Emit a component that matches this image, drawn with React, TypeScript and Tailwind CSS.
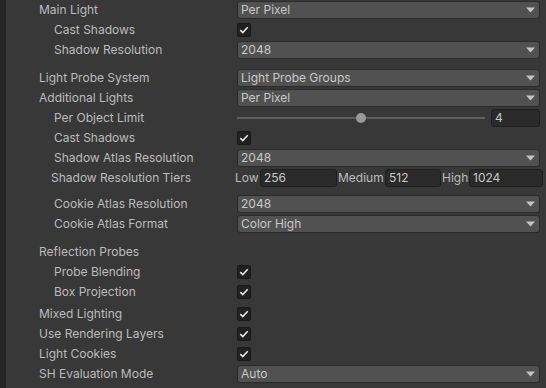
import React from "react";

const font = { fontFamily: "Inter, 'Noto Sans', sans-serif" };

function Arrow() {
  return (
    <svg width="9" height="6" viewBox="0 0 9 6" className="shrink-0">
      <path d="M0 0.5 H9 L4.5 5.5 Z" fill="#c4c4c4" />
    </svg>
  );
}

function Dropdown({ value }: { value: string }) {
  return (
    <div className="flex h-[18px] w-full items-center justify-between rounded-[3px] border border-[#2a2a2a] bg-[#515151] pl-[3px] pr-[4px] text-[#c8c8c8]">
      <span className="leading-none">{value}</span>
      <Arrow />
    </div>
  );
}

function Check() {
  return (
    <div className="flex h-[14px] w-[14px] items-center justify-center rounded-[2px] border border-[#191919] bg-[#202020]">
      <svg width="10" height="8" viewBox="0 0 10 8">
        <path d="M1.3 4.2 L3.8 6.6 L8.7 1.3" fill="none" stroke="#e6e6e6" strokeWidth="1.6" />
      </svg>
    </div>
  );
}

function Field({ value, className }: { value: string; className: string }) {
  return (
    <div className={`flex h-[18px] items-center rounded-[3px] border border-[#1f1f1f] bg-[#2a2a2a] pl-[3px] text-[#c8c8c8] ${className}`}>
      {value}
    </div>
  );
}

function Row({ label, indent, children, labelPad }: { label: string; indent?: boolean; children?: React.ReactNode; labelPad?: string }) {
  return (
    <div className="flex h-[20px] items-center">
      <div className={`w-[237px] shrink-0 ${labelPad ?? (indent ? "pl-[54px]" : "pl-[39px]")}`}>{label}</div>
      <div className="flex flex-1 items-center pr-[6px]">{children}</div>
    </div>
  );
}

export default function App() {
  return (
    <div className="flex h-[388px] w-[546px] overflow-hidden bg-[#383838] text-[12px] text-[#bcbcbc]" style={font}>
      <div className="w-[6px] shrink-0 bg-[#262626]" />
      <div className="-ml-[6px] flex flex-1 flex-col">
        <Row label="Main Light"><Dropdown value="Per Pixel" /></Row>
        <Row label="Cast Shadows" indent><Check /></Row>
        <Row label="Shadow Resolution" indent><Dropdown value="2048" /></Row>
        <div className="h-[8px]" />
        <Row label="Light Probe System"><Dropdown value="Light Probe Groups" /></Row>
        <Row label="Additional Lights"><Dropdown value="Per Pixel" /></Row>
        <Row label="Per Object Limit" indent>
          <div className="relative flex h-[18px] flex-1 items-center">
            <div className="h-[2px] w-full bg-[#5e5e5e]" />
            <div className="absolute left-[119px] h-[10px] w-[10px] rounded-full bg-[#999999]" />
          </div>
          <Field value="4" className="ml-[6px] w-[49px]" />
        </Row>
        <Row label="Cast Shadows" indent><Check /></Row>
        <Row label="Shadow Atlas Resolution" indent><Dropdown value="2048" /></Row>
        <Row label="Shadow Resolution Tiers" labelPad="pl-[51px]">
          <div className="-ml-[2px] -mr-[3px] flex flex-1 items-center">
            <span className="w-[25px]">Low</span>
            <Field value="256" className="w-[77px]" />
            <span className="w-[48px] pl-[1px]">Medium</span>
            <Field value="512" className="w-[56px]" />
            <span className="w-[28px] pl-[1px]">High</span>
            <Field value="1024" className="flex-1" />
          </div>
        </Row>
        <div className="h-[6px]" />
        <Row label="Cookie Atlas Resolution" indent><Dropdown value="2048" /></Row>
        <Row label="Cookie Atlas Format" indent><Dropdown value="Color High" /></Row>
        <div className="h-[8px]" />
        <Row label="Reflection Probes" />
        <Row label="Probe Blending" indent><Check /></Row>
        <Row label="Box Projection" indent><Check /></Row>
        <div className="h-[2px]" />
        <Row label="Mixed Lighting"><Check /></Row>
        <Row label="Use Rendering Layers"><Check /></Row>
        <Row label="Light Cookies"><Check /></Row>
        <Row label="SH Evaluation Mode"><Dropdown value="Auto" /></Row>
      </div>
    </div>
  );
}
